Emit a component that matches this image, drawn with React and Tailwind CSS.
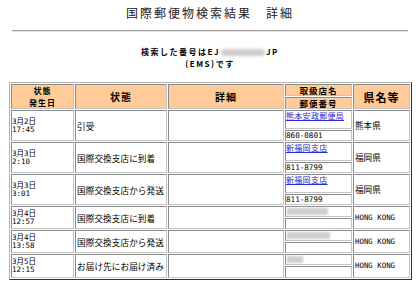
import React from 'react';

// Tracking result rows
const rows = [
  { date: '3月2日', time: '17:45', status: '引受', office: '熊本安政郵便局', zip: '860-0801', pref: '熊本県', tall: true },
  { date: '3月3日', time: '2:10', status: '国際交換支店に到着', office: '新福岡支店', zip: '811-8799', pref: '福岡県', tall: true },
  { date: '3月3日', time: '3:01', status: '国際交換支店から発送', office: '新福岡支店', zip: '811-8799', pref: '福岡県', tall: true },
  { date: '3月4日', time: '12:57', status: '国際交換支店に到着', blur: 'w-[41px]', pref: 'HONG KONG' },
  { date: '3月4日', time: '13:58', status: '国際交換支店から発送', blur: 'w-[43px]', pref: 'HONG KONG' },
  { date: '3月5日', time: '12:15', status: 'お届け先にお届け済み', blur: 'w-[16px]', pref: 'HONG KONG' },
];

const cell = 'border border-t-[#8a8a8a] border-l-[#8a8a8a] border-r-[#c4c4c4] border-b-[#c4c4c4]';
const head = `${cell} bg-[#ffcc99] flex items-center justify-center font-bold tracking-[1px] text-center`;
const mono = "font-[family-name:'DejaVu_Sans_Mono','Noto_Sans_CJK_JP',monospace]";

export default function App() {
  return (
    <div className="w-[420px] h-[307px] bg-white text-black font-[family-name:'Noto_Sans_CJK_JP',sans-serif] overflow-hidden">
      {/* Title */}
      <div className="h-[26px] leading-[26px] text-center text-[12px] tracking-[2px] text-[#222]">
        国際郵便物検索結果　詳細
      </div>
      <div className="mx-[12px] mt-[4px] border-t border-t-[#a0a0a0] border-b border-b-[#e4e4e4]" />

      {/* Searched number */}
      <div className="mt-[14px] text-center font-bold text-[8px] leading-[11.5px] tracking-[1.5px]">
        <div>
          検索した番号はEJ
          <span className="inline-block align-middle w-[44px] h-[7px] mx-[1px] bg-[#cdcdcd] blur-[1.5px] rounded-sm" />
          JP
        </div>
        <div>(EMS)です</div>
      </div>

      {/* Result table */}
      <div className="mt-[13px] ml-[9px] w-[403px] border border-t-[#b4b4b4] border-l-[#b4b4b4] border-r-[#303030] border-b-[#303030] p-[1px]">
        <div className="grid grid-cols-[63px_92px_116px_67px_57px] grid-rows-[25px_31px_31px_31px_23px_23px_24px] gap-[1px]">
          <div className={`${head} flex-col text-[8px] leading-[11.5px] tracking-[1.5px]`}>
            <div>状態</div>
            <div>発生日</div>
          </div>
          <div className={`${head} text-[10px] leading-[12px]`}>状態</div>
          <div className={`${head} text-[10px] leading-[12px]`}>詳細</div>
          <div className="flex flex-col gap-[1px]">
            <div className={`${head} h-[12px] text-[8.5px] leading-[10px]`}>取扱店名</div>
            <div className={`${head} flex-1 text-[8.5px] leading-[10px]`}>郵便番号</div>
          </div>
          <div className={`${head} text-[11px] leading-[12px]`}>県名等</div>

          {rows.map((r, i) => (
            <React.Fragment key={i}>
              <div className={`${cell} ${mono} flex flex-col justify-center text-[7.5px] leading-[8px]`}>
                <div>{r.date}</div>
                <div>{r.time}</div>
              </div>
              <div className={`${cell} flex items-center pl-[1px] text-[8.6px] leading-[10px] tracking-[0.1px]`}>{r.status}</div>
              <div className={cell} />
              <div className="flex flex-col gap-[1px]">
                <div className={`${cell} ${r.tall ? 'flex-1' : 'h-[11px]'}`}>
                  {r.office ? (
                    <a href="#" className="block text-[8px] leading-[10px] text-[#2a2ad0] underline tracking-[0.3px]">
                      {r.office}
                    </a>
                  ) : (
                    <div className={`${r.blur} h-[7px] mt-[1px] ml-[1px] bg-[#cfcfcf] blur-[1px]`} />
                  )}
                </div>
                <div className={`${cell} ${r.tall ? 'h-[11px]' : 'flex-1'} ${mono} text-[7.6px] leading-[9px]`}>
                  {r.zip}
                </div>
              </div>
              <div className={`${cell} ${mono} flex items-center pl-[1px] leading-[10px] ${r.pref === 'HONG KONG' ? 'text-[7.4px]' : 'text-[8.6px]'}`}>
                {r.pref}
              </div>
            </React.Fragment>
          ))}
        </div>
      </div>
    </div>
  );
}
